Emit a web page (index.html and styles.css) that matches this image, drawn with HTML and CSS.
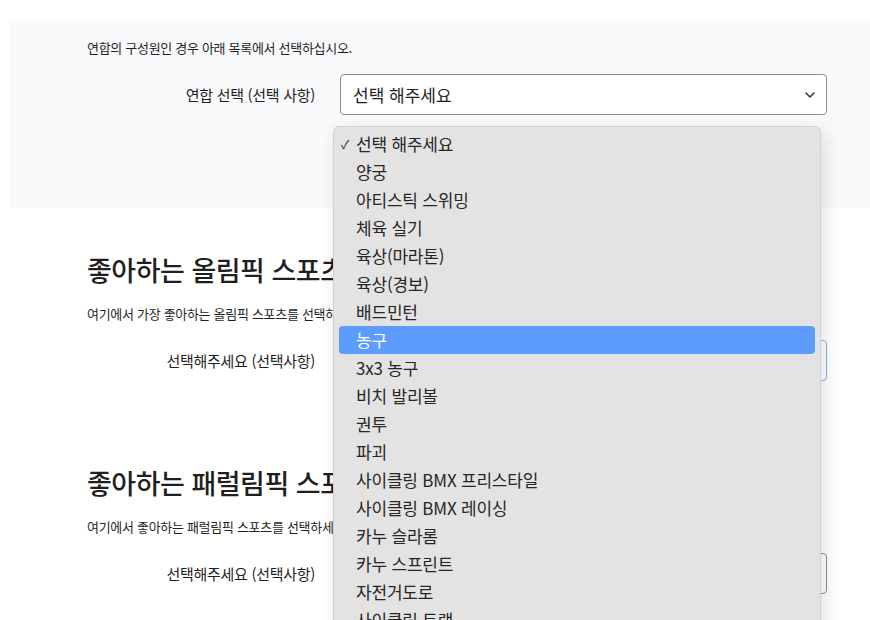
FILE: index.html
```html
<!DOCTYPE html>
<html lang="ko">

<head>
    <meta charset="UTF-8">
    <meta name="viewport" content="width=device-width, initial-scale=1.0">
    <title>스포츠 선택</title>
    <link rel="stylesheet" href="styles.css">
</head>

<body>
    <div class="federation-panel">
        <p class="intro">연합의 구성원인 경우 아래 목록에서 선택하십시오.</p>
        <div class="field-row">
            <label class="field-label">연합 선택 (선택 사항)</label>
            <div class="select-box">
                <span>선택 해주세요</span>
                <svg class="chevron" width="12" height="8" viewBox="0 0 12 8">
                    <path d="M2 2 L6 6 L10 2" fill="none" stroke="#333" stroke-width="1.6" stroke-linecap="round" stroke-linejoin="round"/>
                </svg>
            </div>
        </div>
    </div>

    <div class="sport-section">
        <h2>좋아하는 올림픽 스포츠</h2>
        <p class="hint">여기에서 가장 좋아하는 올림픽 스포츠를 선택하세요.</p>
        <div class="field-row">
            <label class="field-label">선택해주세요 (선택사항)</label>
            <div class="select-box focused">
                <span>선택 해주세요</span>
            </div>
        </div>
    </div>

    <div class="sport-section">
        <h2>좋아하는 패럴림픽 스포츠</h2>
        <p class="hint">여기에서 좋아하는 패럴림픽 스포츠를 선택하세요.</p>
        <div class="field-row">
            <label class="field-label">선택해주세요 (선택사항)</label>
            <div class="select-box">
                <span>선택 해주세요</span>
            </div>
        </div>
    </div>

    <!-- open dropdown of the federation select -->
    <ul class="dropdown-menu">
        <li class="selected">선택 해주세요</li>
        <li>양궁</li>
        <li>아티스틱 스위밍</li>
        <li>체육 실기</li>
        <li>육상(마라톤)</li>
        <li>육상(경보)</li>
        <li>배드민턴</li>
        <li class="hovered">농구</li>
        <li>3x3 농구</li>
        <li>비치 발리볼</li>
        <li>권투</li>
        <li>파괴</li>
        <li>사이클링 BMX 프리스타일</li>
        <li>사이클링 BMX 레이싱</li>
        <li>카누 슬라롬</li>
        <li>카누 스프린트</li>
        <li>자전거도로</li>
        <li>사이클링 트랙</li>
    </ul>
</body>

</html>
```

FILE: styles.css
```css
:root {
    --text: #1f1f1f;
    --panel: #f8f9fa;
    --menu: #e3e3e3;
    --highlight: #5b9cfd;
}

* {
    box-sizing: border-box;
    margin: 0;
    padding: 0;
}

body {
    font-family: "Noto Sans CJK KR", "Noto Sans", sans-serif;
    color: var(--text);
    background: #fff;
    overflow: hidden;
    height: 620px;
}

.federation-panel {
    margin: 21px 0 0 10px;
    height: 187px;
    background: var(--panel);
    padding: 17px 43px 0 77px;
}

.intro,
.hint {
    font-size: 13px;
    line-height: 20px;
    letter-spacing: -0.3px;
}

.field-row {
    display: grid;
    grid-template-columns: 228px 1fr;
    column-gap: 25px;
    align-items: center;
    margin-top: 16px;
}

.field-label {
    text-align: right;
    font-size: 15px;
    letter-spacing: -0.3px;
}

.select-box {
    position: relative;
    height: 41px;
    background: #fff;
    border: 1px solid #8d8d8d;
    border-radius: 4px;
    display: flex;
    align-items: center;
    padding-left: 12px;
    font-size: 17px;
}

.select-box.focused {
    border-color: #7eb2ee;
}

.chevron {
    position: absolute;
    right: 10px;
    top: 16px;
}

.sport-section {
    padding: 0 43px 0 87px;
}

.sport-section:nth-of-type(2) {
    padding-top: 44px;
}

.sport-section:nth-of-type(3) {
    padding-top: 84px;
}

.sport-section h2 {
    font-size: 27px;
    font-weight: 500;
    line-height: 36px;
    letter-spacing: -0.5px;
}

.sport-section .hint {
    margin-top: 16px;
}

.sport-section .field-row {
    margin-top: 16px;
}

.dropdown-menu {
    position: absolute;
    left: 333px;
    top: 126px;
    width: 488px;
    height: 520px;
    list-style: none;
    background: var(--menu);
    border: 1px solid #d2d2d2;
    border-radius: 6px;
    padding: 3px 5px;
    box-shadow: 4px 6px 18px rgba(0, 0, 0, 0.12);
    overflow: hidden;
}

.dropdown-menu li {
    position: relative;
    height: 28px;
    line-height: 28px;
    padding-left: 17px;
    font-size: 17px;
    color: #262626;
    border-radius: 4px;
    letter-spacing: -0.2px;
}

.dropdown-menu li.selected::before {
    content: "✓";
    position: absolute;
    left: 2px;
    font-size: 12px;
}

.dropdown-menu li.hovered {
    background: var(--highlight);
    color: #fff;
}
```
